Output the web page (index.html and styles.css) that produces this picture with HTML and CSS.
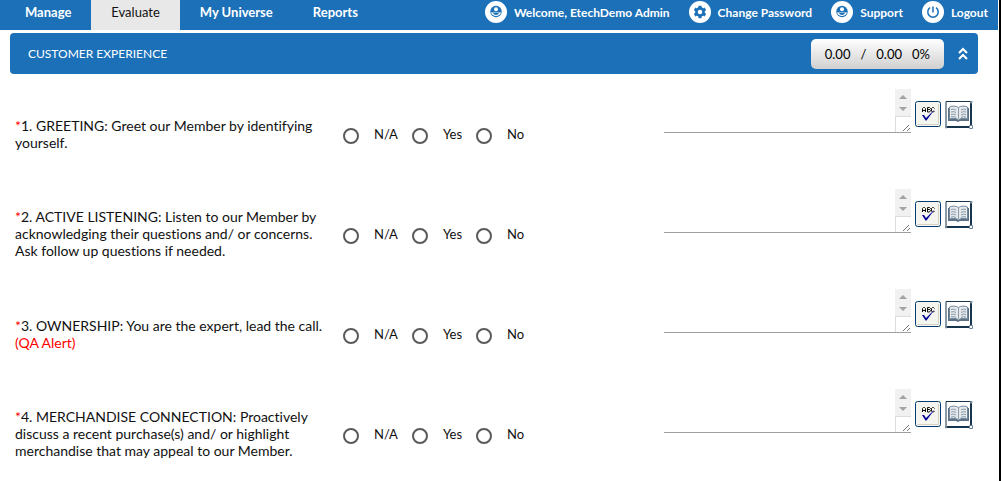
FILE: index.html
```html
<!DOCTYPE html>
<html lang="en">
<head>
<meta charset="utf-8">
<title>Evaluate</title>
<link rel="stylesheet" href="styles.css">
</head>
<body>
<svg class="symbols" aria-hidden="true">
  <symbol id="user" viewBox="0 0 22 22">
    <circle cx="11" cy="11" r="11" fill="#fff"/>
    <circle cx="11" cy="10.500" r="5.700" fill="#1b70b8"/>
    <circle cx="11" cy="8.300" r="2" fill="#fff"/>
    <path d="M6 11.500h10c-1 4.500-9 4.500-10 0z" fill="#fff"/>
    <path d="M8 12h6c-1 2.500-5 2.500-6 0z" fill="#1b70b8"/>
  </symbol>
  <symbol id="gear" viewBox="0 0 22 22">
    <circle cx="11" cy="11" r="11" fill="#fff"/>
    <g fill="none" stroke="#1b70b8">
      <circle cx="11" cy="11" r="3.600" stroke-width="2.600"/>
      <path stroke-width="3" d="M11 4.800v2.500M11 14.700v2.500M5.600 7.900l2.200 1.300M14.200 12.800l2.200 1.300M5.600 14.100l2.200-1.300M14.200 9.200l2.200-1.300"/>
    </g>
  </symbol>
  <symbol id="power" viewBox="0 0 22 22">
    <circle cx="11" cy="11" r="11" fill="#fff"/>
    <path d="M8 6.700a5.200 5.200 0 1 0 6 0M11 5.500v6" fill="none" stroke="#1b70b8" stroke-width="1.500"/>
  </symbol>
  <symbol id="scroll" viewBox="0 0 16 43">
    <path d="M0 0h16v27H0z" fill="#f1f1f1"/>
    <path d="M4 10l4-4 4 4zM4 18h8l-4 4z" fill="#a3a3a3"/>
    <path d="M0 27.500h16M.5 27v16" stroke="#dcdcdc" fill="none"/>
    <path d="M8 42l6-6M12 42l3-3" stroke="#777" fill="none"/>
  </symbol>
  <symbol id="spell" viewBox="0 0 26 26">
    <rect x=".5" y=".5" width="25" height="25" rx="2" fill="#f5f5f0" stroke="#003c74"/>
    <path d="M2 23.500h22M23.500 3v20" stroke="#d6d0c5" fill="none"/>
    <path d="M7.500 11V7.500l1-1h1l1 1V11M7.500 9.500h3M12.500 11V6.500h2l1 1-1 1h-2M14.500 8.500l1 1-1 1.500h-2M19.500 7.500l-1-1h-1l-1 1v2.500l1 1h1l1-1" fill="none" stroke="#111"/>
    <path d="M7 14h2l2 3 9-9-8.500 11.500h-1z" fill="#000096"/>
  </symbol>
  <symbol id="book" viewBox="0 0 28 28">
    <path d="M1 26V.5h25" fill="none" stroke="#17344f" stroke-width="1"/>
    <path d="M1 26h25V2" fill="none" stroke="#17344f" stroke-width="2"/>
    <path d="M3 7v13h8l2 1 2-1h9V7" fill="#5c7186"/>
    <path d="M4.500 6c3-1.500 7-1 9 .5 2-1.500 6-2 9-.5v12c-3-1-7-1-9 1-2-2-6-2-9-1z" fill="#e6e9ec" stroke="#73879a"/>
    <path d="M13.500 7v11M6 8.500q3-1 5 .5M6 11q3-1 5 .5M6 13.500q3-1 5 .5M6 16q3-1 5 .5M16 9q2-1.500 5-.5M16 11.500q2-1.500 5-.5M16 14q2-1.500 5-.5M16 16.500q2-1.500 5-.5" fill="none" stroke="#8b9baa"/>
    <path d="M.5 25.500h1V27h-1zM24.500 24.500h3v3h-3zM25.500 .5h1.500V2h-1.500z" fill="#fff" stroke="#70859a"/>
  </symbol>
</svg>
<nav class="topbar">
  <div class="tabs">
    <a class="tab" href="#">Manage</a>
    <a class="tab active" href="#">Evaluate</a>
    <a class="tab" href="#">My Universe</a>
    <a class="tab" href="#">Reports</a>
  </div>
  <div class="account">
    <a href="#"><svg><use href="#user"/></svg>Welcome, EtechDemo Admin</a>
    <a href="#"><svg><use href="#gear"/></svg>Change Password</a>
    <a href="#"><svg><use href="#user"/></svg>Support</a>
    <a href="#"><svg><use href="#power"/></svg>Logout</a>
  </div>
</nav>
<header class="section-bar">
  <h1>CUSTOMER EXPERIENCE</h1>
  <div class="score"><span>0.00</span><span>/</span><span>0.00</span><span>0%</span></div>
  <button class="collapse" aria-label="Collapse section"><svg viewBox="0 0 10 14"><path d="M1 6l4-4 4 4M1 12l4-4 4 4" fill="none" stroke="#fff" stroke-width="2"/></svg></button>
</header>
<main class="questions">
  <section class="question">
    <p id="q1"><span class="required">*</span>1. GREETING: Greet our Member by identifying yourself.</p>
    <div class="answers" role="radiogroup" aria-labelledby="q1">
      <label><input type="radio" name="a1">N/A</label><label><input type="radio" name="a1">Yes</label><label><input type="radio" name="a1">No</label>
    </div>
    <div class="comment"><textarea aria-label="Comment 1"></textarea><svg><use href="#scroll"/></svg></div>
    <div class="tools"><button class="spell" aria-label="Check spelling"><svg><use href="#spell"/></svg></button><button class="book" aria-label="Reference"><svg><use href="#book"/></svg></button></div>
  </section>
  <section class="question">
    <p id="q2"><span class="required">*</span>2. ACTIVE LISTENING: Listen to our Member by acknowledging their questions and/ or concerns. Ask follow up questions if needed.</p>
    <div class="answers" role="radiogroup" aria-labelledby="q2">
      <label><input type="radio" name="a2">N/A</label><label><input type="radio" name="a2">Yes</label><label><input type="radio" name="a2">No</label>
    </div>
    <div class="comment"><textarea aria-label="Comment 2"></textarea><svg><use href="#scroll"/></svg></div>
    <div class="tools"><button class="spell" aria-label="Check spelling"><svg><use href="#spell"/></svg></button><button class="book" aria-label="Reference"><svg><use href="#book"/></svg></button></div>
  </section>
  <section class="question">
    <p id="q3"><span class="required">*</span>3. OWNERSHIP: You are the expert, lead the call. <span class="alert">(QA Alert)</span></p>
    <div class="answers" role="radiogroup" aria-labelledby="q3">
      <label><input type="radio" name="a3">N/A</label><label><input type="radio" name="a3">Yes</label><label><input type="radio" name="a3">No</label>
    </div>
    <div class="comment"><textarea aria-label="Comment 3"></textarea><svg><use href="#scroll"/></svg></div>
    <div class="tools"><button class="spell" aria-label="Check spelling"><svg><use href="#spell"/></svg></button><button class="book" aria-label="Reference"><svg><use href="#book"/></svg></button></div>
  </section>
  <section class="question">
    <p id="q4"><span class="required">*</span>4. MERCHANDISE CONNECTION: Proactively discuss a recent purchase(s) and/ or highlight merchandise that may appeal to our Member.</p>
    <div class="answers" role="radiogroup" aria-labelledby="q4">
      <label><input type="radio" name="a4">N/A</label><label><input type="radio" name="a4">Yes</label><label><input type="radio" name="a4">No</label>
    </div>
    <div class="comment"><textarea aria-label="Comment 4"></textarea><svg><use href="#scroll"/></svg></div>
    <div class="tools"><button class="spell" aria-label="Check spelling"><svg><use href="#spell"/></svg></button><button class="book" aria-label="Reference"><svg><use href="#book"/></svg></button></div>
  </section>
</main>
</body>
</html>
```
FILE: styles.css
```css
* { box-sizing: border-box; }
html { background: #fff; }
body {
  margin: 0;
  padding-right: 1px;
  border-right: 2px solid #000;
  font: 13px/17px Lato, sans-serif;
  font-variant-ligatures: none;
  color: #111;
}
.symbols { display: none; }
button { padding: 0; border: 0; background: none; cursor: pointer; }
button svg { display: block; width: 100%; height: 100%; }
.topbar {
  display: flex;
  justify-content: space-between;
  height: 30px;
  padding-right: 10px;
  background: #1b70b8;
}
.topbar a { color: #fff; text-decoration: none; white-space: nowrap; }
.tabs { display: flex; }
.tab { padding: 4px 20px 9px; font-weight: 700; }
.tab:first-child { padding-left: 25px; }
.topbar .active { background: #e8e8e8; color: #111; font-weight: 400; }
.account { display: flex; gap: 19px; height: 24px; font-size: 12px; font-weight: 700; }
.account a { display: flex; align-items: center; gap: 7px; }
.account svg { width: 22px; height: 22px; }
.section-bar {
  display: flex;
  align-items: center;
  height: 41px;
  margin: 3px 20px 11px 10px;
  padding: 0 10px 0 18px;
  border-radius: 4px;
  background: #1b70b8;
}
.section-bar h1 { flex: 1; margin: 0; font-size: 12px; font-weight: 400; color: #fff; }
.score {
  display: flex;
  gap: 10px;
  padding: 7px 14px 6px;
  border-radius: 5px;
  background: linear-gradient(#fff, #d0d0d0);
  color: #000;
}
.collapse { width: 10px; height: 14px; margin-left: 14px; }
.question {
  display: grid;
  grid-template-columns: 315px minmax(180px, 1fr) 247px 62px;
  align-items: center;
  min-height: 100px;
  padding: 0 25px 0 15px;
}
.question p { margin: 0; padding-bottom: 3px; font-size: 14px; }
.required, .alert { color: #f00; }
.answers { display: flex; gap: 14px; padding-left: 13px; }
.answers label { display: flex; gap: 15px; }
.answers input {
  appearance: none;
  width: 16px;
  height: 16px;
  margin: 2px 0 0;
  border: 2px solid #5a5a5a;
  border-radius: 50%;
}
.comment { display: flex; align-self: start; height: 44px; margin-top: 4px; border-bottom: 1px solid #9e9e9e; }
.comment textarea { flex: 1; min-width: 0; border: 0; outline: 0; resize: none; font: inherit; overflow: hidden; }
.comment svg { width: 16px; height: 43px; }
.tools { display: flex; align-self: start; gap: 4px; padding: 16px 0 0 4px; }
.spell { width: 26px; height: 26px; }
.book { width: 28px; height: 28px; }
```
